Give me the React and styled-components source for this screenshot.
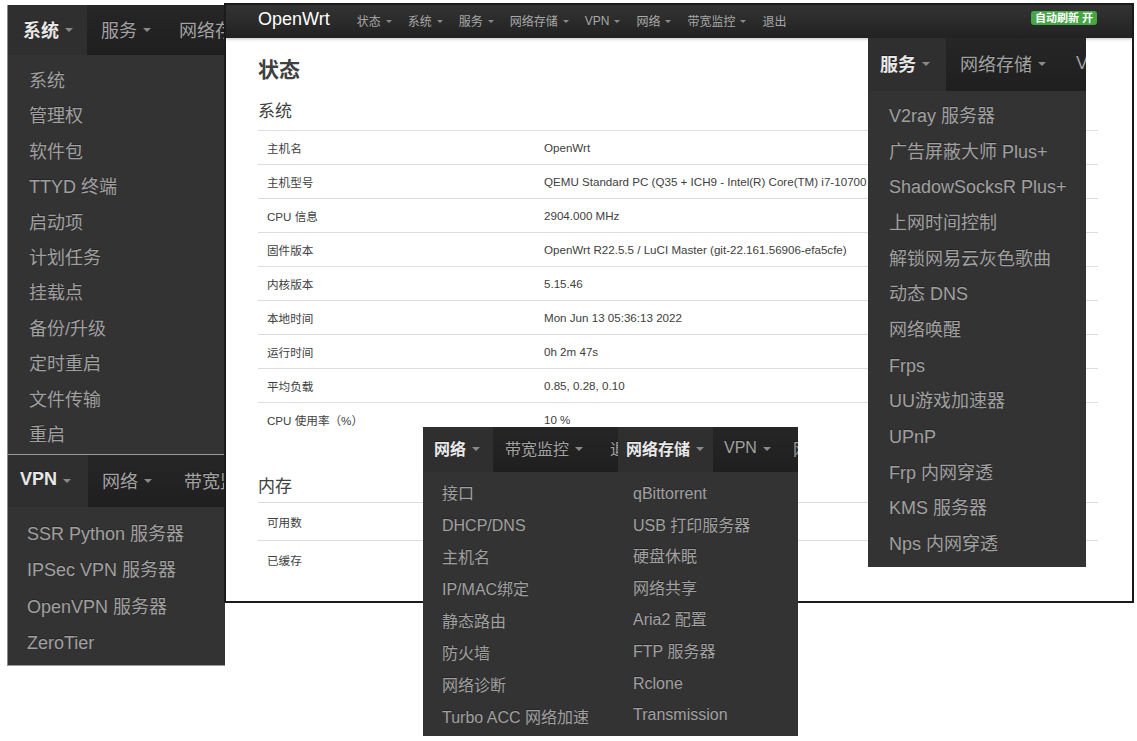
import React from 'react';
import styled, { createGlobalStyle } from 'styled-components';

const Global = createGlobalStyle`
  html, body { margin: 0; padding: 0; background: #fff; }
  body { font-family: "Liberation Sans", "Noto Sans CJK SC", Arial, sans-serif; }
  * { box-sizing: border-box; }
`;

const Canvas = styled.div`
  position: relative;
  width: 1137px;
  height: 741px;
  overflow: hidden;
  background: #fff;
`;

/* ---------- cropped dropdown-menu screenshots (placed freely on canvas) ---------- */
const Shot = styled.div`
  position: absolute;
  left: ${p => p.$x}px;
  top: ${p => p.$y}px;
  width: ${p => p.$w}px;
  height: ${p => p.$h}px;
  z-index: ${p => p.$z};
  display: flex;
  flex-direction: column;
  overflow: hidden;
  background: #333;
  border-left: ${p => (p.$edge ? '1px solid #8c8c8c' : 'none')};
  border-bottom: ${p => (p.$edge ? '1px solid #9a9a9a' : 'none')};
`;

const Header = styled.div`
  flex: none;
  height: ${p => p.$h}px;
  padding-bottom: 3px;
  display: flex;
  align-items: stretch;
  background: linear-gradient(#262626, #1f1f1f);
  font-size: ${p => p.$fs}px;
  white-space: nowrap;
`;

const Tab = styled.div`
  flex: none;
  width: ${p => (p.$w ? `${p.$w}px` : 'auto')};
  padding-left: ${p => p.$pl}px;
  padding-right: 14px;
  margin-bottom: -3px;
  padding-bottom: 3px;
  display: flex;
  align-items: center;
  background: ${p => (p.$active ? '#2f2f2f' : 'transparent')};
  color: ${p => (p.$active ? '#e8e8e8' : '#a2a2a2')};
  font-weight: ${p => (p.$active ? 700 : 400)};
  text-shadow: 0 -1px 0 rgba(0, 0, 0, 0.35);
`;

const Caret = styled.span`
  display: inline-block;
  margin-left: ${p => p.$gap}px;
  border-left: ${p => p.$s}px solid transparent;
  border-right: ${p => p.$s}px solid transparent;
  border-top: ${p => Math.round(p.$s * 0.9)}px solid #8a8a8a;
  margin-top: 2px;
`;

const Items = styled.div`
  flex: 1;
  padding-top: ${p => p.$pt}px;
  padding-left: ${p => p.$pl}px;
  font-size: ${p => p.$fs}px;
  color: #a0a0a0;
  text-shadow: 0 -1px 0 rgba(0, 0, 0, 0.3);
  white-space: nowrap;
`;

const Item = styled.div`
  line-height: ${p => p.$lh}px;
  height: ${p => p.$lh}px;
`;

function MenuShot({ x, y, w, h, z, edge, headH, fs, tabs, items, pt, pl, lh, caret }) {
  return (
    <Shot $x={x} $y={y} $w={w} $h={h} $z={z} $edge={edge}>
      <Header $h={headH} $fs={fs}>
        {tabs.map((t, i) => (
          <Tab key={i} $active={i === 0} $w={t.w} $pl={t.pl}>
            {t.label}
            <Caret $s={caret} $gap={caret + 2} />
          </Tab>
        ))}
      </Header>
      <Items $pt={pt} $pl={pl} $fs={fs}>
        {items.map(it => (
          <Item key={it} $lh={lh}>{it}</Item>
        ))}
      </Items>
    </Shot>
  );
}

/* ---------- main OpenWrt window ---------- */
const Window = styled.div`
  position: absolute;
  left: 224px;
  top: 3px;
  width: 910px;
  height: 600px;
  z-index: 2;
  border: 2px solid #1b1b1b;
  background: #fff;
  display: flex;
  flex-direction: column;
  overflow: hidden;
`;

const NavBar = styled.div`
  flex: none;
  height: 33px;
  display: flex;
  align-items: center;
  padding: 0 34px 2px 32px;
  background: linear-gradient(#333, #222);
  box-shadow: 0 1px 3px rgba(0, 0, 0, 0.25);
`;

const Brand = styled.div`
  font-size: 18px;
  color: #fff;
  margin-right: 27px;
  margin-top: -2px;
`;

const NavItem = styled.div`
  display: flex;
  align-items: center;
  font-size: 12px;
  color: #a8a8a8;
  margin-right: 16px;
  white-space: nowrap;
`;

const NavCaret = styled.span`
  display: inline-block;
  margin-left: 5px;
  border-left: 3px solid transparent;
  border-right: 3px solid transparent;
  border-top: 3px solid #8a8a8a;
  margin-top: 1px;
`;

const Spacer = styled.div`
  flex: 1;
`;

const Badge = styled.div`
  background: #46a546;
  color: #fff;
  font-size: 11px;
  font-weight: 700;
  line-height: 14px;
  padding: 0 4px;
  border-radius: 3px;
  margin-right: 1px;
  margin-top: -6px;
  white-space: nowrap;
`;

const Content = styled.div`
  padding: 0 34px 0 32px;
  color: #404040;
`;

const Title = styled.h2`
  margin: 20px 0 0;
  font-size: 21px;
  line-height: 24px;
  font-weight: 700;
  color: #404040;
`;

const Section = styled.h3`
  margin: ${p => p.$mt}px 0 ${p => p.$mb}px;
  font-size: 17px;
  line-height: 20px;
  font-weight: 400;
  color: #404040;
`;

const Table = styled.div`
  display: flex;
  flex-direction: column;
`;

const Row = styled.div`
  display: grid;
  grid-template-columns: 277px 1fr;
  height: ${p => p.$h}px;
  align-items: center;
  border-top: 1px solid #ddd;
  font-size: 11.6px;
  color: #404040;
  white-space: nowrap;
`;

const Cell = styled.div`
  padding-left: 9px;
`;

const navItems = ['状态', '系统', '服务', '网络存储', 'VPN', '网络', '带宽监控'];

const sysRows = [
  ['主机名', 'OpenWrt'],
  ['主机型号', 'QEMU Standard PC (Q35 + ICH9 - Intel(R) Core(TM) i7-10700 CPU @ 2.90GHz'],
  ['CPU 信息', '2904.000 MHz'],
  ['固件版本', 'OpenWrt R22.5.5 / LuCI Master (git-22.161.56906-efa5cfe)'],
  ['内核版本', '5.15.46'],
  ['本地时间', 'Mon Jun 13 05:36:13 2022'],
  ['运行时间', '0h 2m 47s'],
  ['平均负载', '0.85, 0.28, 0.10'],
  ['CPU 使用率（%）', '10 %'],
];

const memRows = [
  ['可用数', ''],
  ['已缓存', ''],
];

const sysItems = ['系统', '管理权', '软件包', 'TTYD 终端', '启动项', '计划任务', '挂载点', '备份/升级', '定时重启', '文件传输', '重启'];
const vpnItems = ['SSR Python 服务器', 'IPSec VPN 服务器', 'OpenVPN 服务器', 'ZeroTier'];
const svcItems = ['V2ray 服务器', '广告屏蔽大师 Plus+', 'ShadowSocksR Plus+', '上网时间控制', '解锁网易云灰色歌曲', '动态 DNS', '网络唤醒', 'Frps', 'UU游戏加速器', 'UPnP', 'Frp 内网穿透', 'KMS 服务器', 'Nps 内网穿透'];
const netItems = ['接口', 'DHCP/DNS', '主机名', 'IP/MAC绑定', '静态路由', '防火墙', '网络诊断', 'Turbo ACC 网络加速'];
const nasItems = ['qBittorrent', 'USB 打印服务器', '硬盘休眠', '网络共享', 'Aria2 配置', 'FTP 服务器', 'Rclone', 'Transmission'];

export default function App() {
  return (
    <>
      <Global />
      <Canvas>
        <MenuShot
          x={7} y={5} w={218} h={450} z={1} edge
          headH={50} fs={18} caret={4}
          tabs={[{ label: '系统', w: 79, pl: 15 }, { label: '服务', w: 78, pl: 14 }, { label: '网络存储', pl: 14 }]}
          items={sysItems} pt={9} pl={21} lh={35.4}
        />
        <MenuShot
          x={7} y={455} w={218} h={211} z={1} edge
          headH={52} fs={18} caret={4}
          tabs={[{ label: 'VPN', w: 80, pl: 12 }, { label: '网络', w: 82, pl: 14 }, { label: '带宽监控', pl: 14 }]}
          items={vpnItems} pt={9} pl={19} lh={36.3}
        />

        <Window>
          <NavBar>
            <Brand>OpenWrt</Brand>
            {navItems.map(n => (
              <NavItem key={n}>
                {n}
                <NavCaret />
              </NavItem>
            ))}
            <NavItem>退出</NavItem>
            <Spacer />
            <Badge>自动刷新 开</Badge>
          </NavBar>
          <Content>
            <Title>状态</Title>
            <Section $mt={20} $mb={8}>系统</Section>
            <Table>
              {sysRows.map(([k, v]) => (
                <Row key={k} $h={34}>
                  <Cell>{k}</Cell>
                  <Cell>{v}</Cell>
                </Row>
              ))}
            </Table>
            <Section $mt={41} $mb={5}>内存</Section>
            <Table>
              {memRows.map(([k, v]) => (
                <Row key={k} $h={38}>
                  <Cell>{k}</Cell>
                  <Cell>{v}</Cell>
                </Row>
              ))}
            </Table>
          </Content>
        </Window>

        <MenuShot
          x={868} y={38} w={218} h={529} z={3}
          headH={53} fs={18} caret={4}
          tabs={[{ label: '服务', w: 78, pl: 12 }, { label: '网络存储', w: 116, pl: 14 }, { label: 'VPN', pl: 14 }]}
          items={svcItems} pt={8} pl={21} lh={35.67}
        />

        <MenuShot
          x={423} y={427} w={200} h={309} z={4}
          headH={45} fs={16} caret={4}
          tabs={[{ label: '网络', w: 70, pl: 11 }, { label: '带宽监控', w: 105, pl: 12 }, { label: '退出', pl: 12 }]}
          items={netItems} pt={6} pl={19} lh={32}
        />
        <MenuShot
          x={618} y={427} w={180} h={309} z={5}
          headH={45} fs={16} caret={4}
          tabs={[{ label: '网络存储', w: 95, pl: 8 }, { label: 'VPN', w: 68, pl: 11 }, { label: '网络', pl: 12 }]}
          items={nasItems} pt={6} pl={15} lh={31.6}
        />
      </Canvas>
    </>
  );
}
